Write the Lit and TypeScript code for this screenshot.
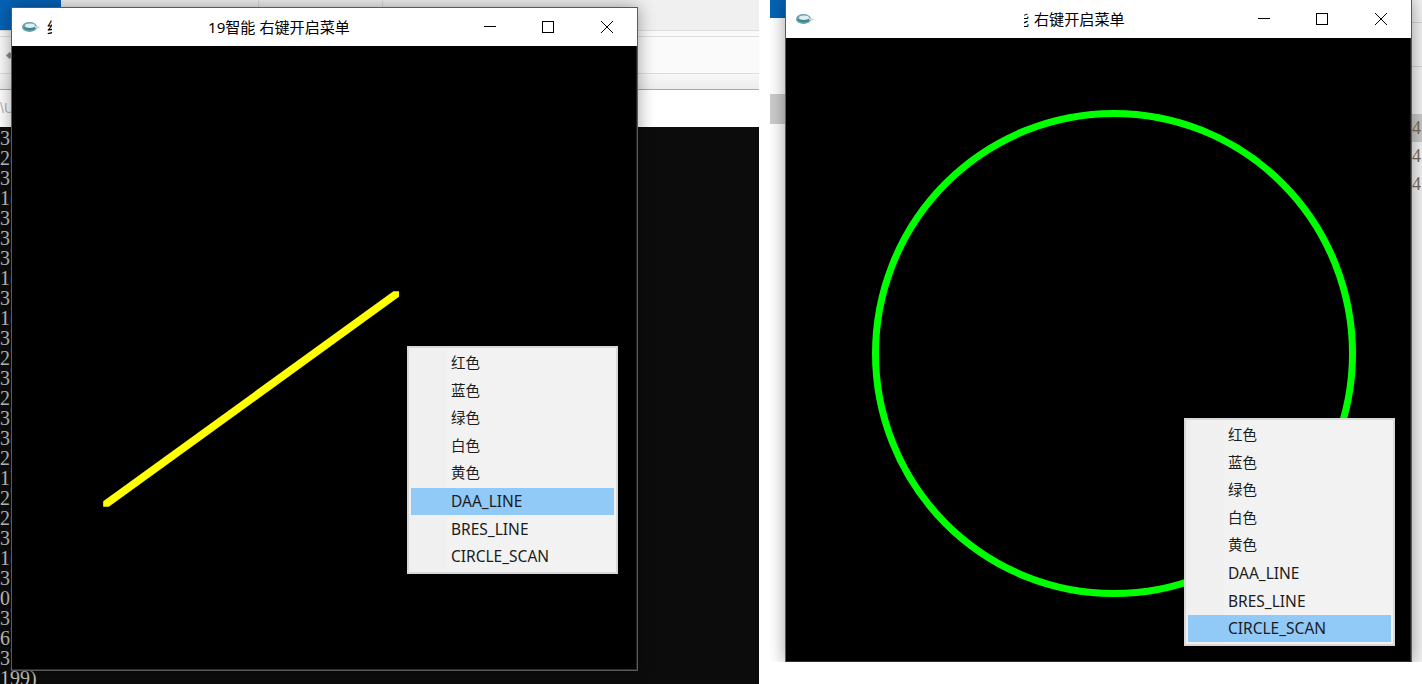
import { LitElement, html, css, svg } from "lit";
import { customElement, property } from "lit/decorators.js";

const MENU = ["红色", "蓝色", "绿色", "白色", "黄色", "DAA_LINE", "BRES_LINE", "CIRCLE_SCAN"];
const CODE = [
  ["3", "("], ["2", "("], ["3", ")"], ["1", "("], ["3", ")"], ["3", ")"], ["3", ")"],
  ["1", "("], ["3", ")"], ["1", "("], ["3", ")"], ["2", ")"], ["3", ")"], ["2", ")"],
  ["3", ")"], ["3", "("], ["2", ")"], ["1", ")"], ["2", ")"], ["2", "("], ["3", ")"],
  ["1", "("], ["3", ")"], ["0", ")"], ["3", ")"], ["6", ")"], ["3", ")"],
];

@customElement("ctx-menu")
class CtxMenu extends LitElement {
  @property({ type: Number }) active = 0;
  static styles = css`
    :host {
      display: block;
      width: 211px;
      box-sizing: border-box;
      border: 2px solid #d8d8d8;
      padding: 2px;
      background: linear-gradient(90deg, #f0f0f0 0 38px, #f2f2f2 38px);
      font: 14.5px "Noto Sans", "Noto Sans CJK SC", sans-serif;
      color: #1c1c1c;
    }
    .item {
      height: 27.5px;
      box-sizing: border-box;
      display: flex;
      align-items: center;
      padding: 0 0 4px 40px;
      white-space: nowrap;
    }
    .latin {
      font-size: 15.5px;
      padding-bottom: 0;
    }
    .on {
      background: #91c9f7;
    }
  `;
  render() {
    return MENU.map(
      (m, i) =>
        html`<div class="item ${i > 4 ? "latin" : ""} ${i === this.active ? "on" : ""}">${m}</div>`
    );
  }
}

@customElement("app-window")
class AppWindow extends LitElement {
  @property() fragment = "";
  @property() caption = "";
  @property({ type: Boolean }) tail = false;
  static styles = css`
    :host {
      display: block;
      width: 627px;
      height: 664px;
      box-sizing: border-box;
      border: 1px solid #5a5a5a;
      box-shadow: 0 0 16px rgba(0, 0, 0, 0.38);
      background: #000;
    }
    .bar {
      height: 38px;
      box-sizing: border-box;
      background: #fff;
      display: flex;
      align-items: center;
      font: 15.1px "Noto Sans", "Noto Sans CJK SC", sans-serif;
      color: #000;
      padding: 0 1px 0 10px;
    }
    .fish {
      width: 19px;
      height: 12px;
      flex: none;
      filter: blur(0.35px);
    }
    .clip {
      width: 5px;
      margin: -3px 0 0 6px;
      overflow: hidden;
      flex: none;
      display: flex;
    }
    .cap {
      flex: 1;
      white-space: nowrap;
      margin: -3px 0 0 156px;
    }
    .tail .clip {
      justify-content: flex-end;
      margin-left: 209px;
    }
    .tail .cap {
      margin-left: 5px;
    }
    .btn {
      width: 58px;
      height: 38px;
      display: flex;
      align-items: center;
      justify-content: center;
      flex: none;
    }
    .btn.mid {
      width: 59px;
      padding-right: 1px;
      box-sizing: border-box;
    }
    .btn svg {
      width: 12px;
      height: 12px;
      overflow: visible;
    }
    .canvas {
      position: relative;
      height: 624px;
      box-sizing: border-box;
      background: #000;
      border-right: 1px solid #222;
      border-bottom: 1px solid #2e2e2e;
    }
  `;
  render() {
    return html`
      <div class="bar ${this.tail ? "tail" : ""}">
        <svg class="fish" viewBox="0 0 19 12">
          <ellipse cx="7.5" cy="6" rx="7.5" ry="5" fill="#6ca3ad" />
          <ellipse cx="8" cy="4.8" rx="5" ry="2.2" fill="#e3eeef" />
          <path d="M1 7 Q7 11.5 14 7.5 L18 6.4 L13 6 Q8 8 2 6 Z" fill="#3f8791" />
          <path d="M13 4.8 L19 6.2 L13 7.6 Z" fill="#c3d8dc" />
        </svg>
        <span class="clip"><span>${this.fragment}</span></span>
        <span class="cap">${this.caption}</span>
        <span class="btn">
          <svg viewBox="0 0 12 12"><path d="M0 5.5H12" stroke="#000" fill="none" /></svg>
        </span>
        <span class="btn mid">
          <svg viewBox="0 0 12 12"><rect x="0.5" y="0.5" width="11" height="11" stroke="#000" fill="none" /></svg>
        </span>
        <span class="btn">
          <svg viewBox="0 0 12 12"><path d="M0 0L12 12M12 0L0 12" stroke="#000" fill="none" /></svg>
        </span>
      </div>
      <div class="canvas"><slot></slot></div>
    `;
  }
}

@customElement("app-root")
class AppRoot extends LitElement {
  static styles = css`
    :host {
      display: flex;
      gap: 11px;
      width: 1422px;
      height: 684px;
      background: #fff;
      overflow: hidden;
      font-family: "Liberation Serif", serif;
    }
    .pane {
      position: relative;
      overflow: hidden;
      flex: none;
    }
    .pane-a {
      width: 759px;
      height: 684px;
      display: flex;
      flex-direction: column;
    }
    .pane-b {
      width: 652px;
      height: 662px;
      display: flex;
      justify-content: space-between;
      background: #fff;
    }
    .tabs {
      height: 30px;
      background: #f0f0f0;
      display: flex;
      flex: none;
    }
    .tabs i {
      width: 61px;
      background: #0563b5;
    }
    .tabs b {
      width: 197px;
      border-right: 1px solid #dcdcdc;
    }
    .tabs u {
      width: 123px;
      border-right: 1px solid #dcdcdc;
    }
    .strip {
      height: 7px;
      flex: none;
      box-sizing: border-box;
      background: #fafafa;
      border-top: 1px solid #dddddd;
      border-bottom: 1px solid #dddddd;
    }
    .ribbon {
      height: 37px;
      flex: none;
      box-sizing: border-box;
      background: #fafafa;
      border-bottom: 1px solid #dddddd;
      display: flex;
      align-items: center;
      padding-left: 7px;
    }
    .ribbon i {
      width: 5px;
      height: 5px;
      background: #8d8d8d;
      transform: rotate(45deg);
    }
    .sub {
      height: 16px;
      flex: none;
      box-sizing: border-box;
      background: linear-gradient(#f8f8f8, #ececec);
      border-bottom: 1px solid #a8a8a8;
    }
    .path {
      height: 37px;
      flex: none;
      box-sizing: border-box;
      background: #fff;
      color: #b5b5b5;
      font: 14px "Liberation Sans", sans-serif;
      padding-top: 10px;
    }
    .code {
      flex: 1;
      background: #0c0c0c;
      font-size: 20px;
      line-height: 20px;
      white-space: nowrap;
      padding-top: 1px;
      color: #c4c4bc;
    }
    .code em {
      font-style: normal;
      color: #4f8fd0;
    }
    .side-l {
      width: 15px;
      flex: none;
    }
    .side-l i {
      display: block;
      height: 18px;
      background: #0563b5;
    }
    .side-l b {
      display: block;
      height: 30px;
      margin-top: 76px;
      background: #cccccc;
    }
    .side-r {
      width: 11px;
      flex: none;
      background: #f2f2f2;
      color: #7a6a55;
      font-size: 18px;
      text-align: right;
    }
    .rule {
      height: 1px;
      background: #d4d4d4;
    }
    .rule-1 {
      margin-top: 22px;
    }
    .rule-2 {
      margin-top: 43px;
    }
    .num {
      height: 28px;
      line-height: 28px;
      overflow: hidden;
      padding-left: 1px;
      text-align: left;
    }
    .num-first {
      margin-top: 47px;
      background: #c9c9c9;
    }
    .win-a {
      position: absolute;
      left: 11px;
      top: 7px;
    }
    .win-b {
      position: absolute;
      left: 15px;
      top: -1px;
    }
    .art {
      position: absolute;
      left: 0;
      top: 0;
      width: 625px;
      height: 624px;
      display: block;
    }
    .menu-a {
      position: absolute;
      left: 395px;
      top: 300px;
    }
    .menu-b {
      position: absolute;
      left: 398px;
      top: 380px;
    }
  `;
  render() {
    return html`
      <div class="pane pane-a">
        <div class="tabs"><i></i><b></b><u></u></div>
        <div class="strip"></div>
        <div class="ribbon"><i></i></div>
        <div class="sub"></div>
        <div class="path">\\U</div>
        <div class="code">
          ${CODE.map((l) => html`<div>${l[0]}<em>${l[1]}</em></div>`)}
          <div>199)</div>
        </div>
        <app-window class="win-a" fragment="约" caption="19智能 右键开启菜单">
          <svg class="art" viewBox="0 0 625 624">
            ${svg`<polygon points="91.2,460.8 96.8,460.8 387,250.8 387,245.2 381.4,245.2 91.2,455.2" fill="#ffff00" />`}
          </svg>
          <ctx-menu class="menu-a" active="5"></ctx-menu>
        </app-window>
      </div>
      <div class="pane pane-b">
        <div class="side-l"><i></i><b></b></div>
        <div class="side-r">
          <div class="rule rule-1"></div>
          <div class="rule rule-2"></div>
          <div class="num num-first">4</div>
          <div class="num">4</div>
          <div class="num">4</div>
        </div>
        <app-window class="win-b" tail fragment="能" caption="右键开启菜单">
          <svg class="art" viewBox="0 0 625 624">
            ${svg`<ellipse cx="328" cy="315.5" rx="238.5" ry="240" fill="none" stroke="#00ff00" stroke-width="7" />`}
          </svg>
          <ctx-menu class="menu-b" active="7"></ctx-menu>
        </app-window>
      </div>
    `;
  }
}
